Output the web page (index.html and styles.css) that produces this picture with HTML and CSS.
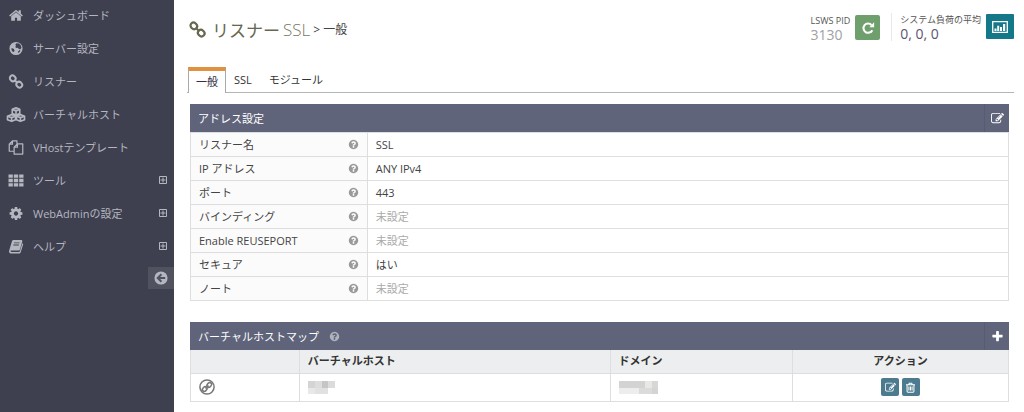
FILE: index.html
```html
<!DOCTYPE html>
<html lang="ja">
<head>
    <meta charset="UTF-8">
    <meta name="viewport" content="width=device-width, initial-scale=1.0">
    <title>リスナー SSL</title>
    <link rel="stylesheet" href="styles.css">
</head>
<body>
    <svg class="sprite" aria-hidden="true">
        <symbol id="i-home" viewBox="0 0 1792 1792"><path d="M1472 992v480q0 26-19 45t-45 19h-384v-384h-256v384h-384q-26 0-45-19t-19-45v-480q0-1 .5-3t.5-3l575-474 575 474q1 2 1 6zm223-69l-62 74q-8 9-21 11h-3q-13 0-21-7l-692-577-692 577q-12 8-24 7-13-2-21-11l-62-74q-8-10-7-23.500t11-21.500l719-599q32-26 76-26t76 26l244 204v-195q0-14 9-23t23-9h192q14 0 23 9t9 23v408l219 182q10 8 11 21.500t-7 23.500z"/></symbol>
        <symbol id="i-globe" viewBox="0 0 16 16"><path fill-rule="evenodd" d="M8 1a7 7 0 1 1 0 14A7 7 0 0 1 8 1zM8.500 2.500L7.200 4l.9 1-1 1.500 1.500 1 1.400-.4 1 1.400 1.800.2 1-1.700-.9-2.700-1.700-1.600zM4.300 7.600l-1.300.5.400 2 1.500 1.700.9-.3.700-1.400-.8-1.700zM11.800 9.600l-1.300 1.200-.6 1.900 1.700-.8 1.100-1.500z"/></symbol>
        <symbol id="i-link" viewBox="0 0 16 16"><g fill="none" stroke="currentColor" stroke-width="2.100"><rect x="1.300" y="1.800" width="6.400" height="5.600" rx="2.800" transform="rotate(45 4.500 4.600)"/><rect x="8.300" y="8.600" width="6.400" height="5.600" rx="2.800" transform="rotate(45 11.500 11.400)"/><path d="M6.500 6.600l3 2.800"/></g></symbol>
        <symbol id="i-cubes" viewBox="0 0 20 16"><g fill="none" stroke="currentColor" stroke-width="1.700" stroke-linejoin="round"><path d="M10 .9l4 1.600v4.300L10 8.500 6 6.800V2.500zM5.300 8.100l4.200 1.700v3.800l-4.200 1.600-4.400-1.600V9.800zM14.700 8.100l4.400 1.700v3.800l-4.400 1.600-4.200-1.600V9.800z"/><path d="M6 2.700l4 1.600 4-1.600M10 4.300v4.200M.9 9.900l4.400 1.700 4.200-1.700M5.300 11.600v3.600M10.500 9.900l4.200 1.700 4.400-1.700M14.700 11.600v3.600"/></g><path d="M6 2.500l4-1.600 4 1.600-4 1.800zM.9 9.800l4.400-1.700 4.200 1.700-4.200 1.800zM10.500 9.800l4.200-1.700 4.400 1.700-4.400 1.800z" opacity=".5"/></symbol>
        <symbol id="i-copy" viewBox="0 0 16 16"><path fill="none" stroke="currentColor" stroke-width="1.300" stroke-linejoin="round" d="M6 12H.8V4.500L4.200 1H9v3M4.200 1v3.500H.8M9.500 4.200h5.700V15H6V7.600zM9.500 4.200v3.500H6"/></symbol>
        <symbol id="i-th" viewBox="0 0 16 16"><path d="M0 1.500h4.600V5H0zM5.700 1.500h4.600V5H5.700zM11.400 1.500H16V5h-4.600zM0 6.200h4.600v3.600H0zM5.700 6.200h4.600v3.600H5.700zM11.400 6.200H16v3.600h-4.600zM0 11h4.600v3.500H0zM5.700 11h4.600v3.500H5.700zM11.400 11H16v3.500h-4.600z"/></symbol>
        <symbol id="i-cog" viewBox="0 0 1792 1792"><path d="M1152 896q0-106-75-181t-181-75-181 75-75 181 75 181 181 75 181-75 75-181zm512-109v222q0 12-8 23t-20 13l-185 28q-19 54-39 91 35 50 107 138 10 12 10 25t-9 23q-27 37-99 108t-94 71q-12 0-26-9l-138-108q-44 23-91 38-16 136-29 186-7 28-36 28h-222q-14 0-24.500-8.500t-11.500-21.500l-28-184q-49-16-90-37l-141 107q-10 9-25 9-14 0-25-11-126-114-165-168-7-10-7-23 0-12 8-23 15-21 51-66.500t54-70.500q-27-50-41-99l-183-27q-13-2-21-12.500t-8-23.500v-222q0-12 8-23t19-13l186-28q14-46 39-92-40-57-107-138-10-12-10-24 0-10 9-23 26-36 98.500-107.500t94.500-71.500q13 0 26 10l138 107q44-23 91-38 16-136 29-186 7-28 36-28h222q14 0 24.500 8.500t11.500 21.500l28 184q49 16 90 37l142-107q9-9 24-9 13 0 25 10 129 119 165 170 7 8 7 22 0 12-8 23-15 21-51 66.500t-54 70.500q26 50 41 98l183 28q13 2 21 12.500t8 23.500z"/></symbol>
        <symbol id="i-book" viewBox="0 0 16 16"><path fill-rule="evenodd" d="M5.300 1h8.200c1 0 1.500.7 1.200 1.700l-2.400 8.200c-.3 1-.8 1.300-1.700 1.300H3c-.7 0-1 .4-.8.900.2.500.6.700 1.200.7h7.700c.6 0 .9-.3 1.100-.9l2.600-8.400c.8.4 1 .9.700 1.700l-2.500 8c-.3.900-1 1.300-1.900 1.300H3.200C1.700 15.500.5 14.500.5 13c0-.5.300-.9.400-1.400L3.700 2.500C4 1.600 4.400 1 5.300 1zM6 3.600l-.3.900h5.900l.3-.9zM5.300 5.900l-.3.900h5.900l.3-.9z"/></symbol>
        <symbol id="i-plus-box" viewBox="0 0 8 8"><path fill="none" stroke="currentColor" d="M.5.5h7v7h-7zM1.500 4h5M4 1.500v5"/></symbol>
        <symbol id="i-back" viewBox="0 0 16 16"><circle cx="8" cy="8" r="7.500"/><path fill="none" stroke="#51525f" stroke-width="2.200" d="M8.500 3.700L4.200 8l4.300 4.300M4.500 8h8.300"/></symbol>
        <symbol id="i-help" viewBox="0 0 1792 1792"><path d="M1024 1376v-192q0-14-9-23t-23-9h-192q-14 0-23 9t-9 23v192q0 14 9 23t23 9h192q14 0 23-9t9-23zm256-672q0-88-55.500-163t-138.500-116-170-41q-243 0-371 213-15 24 8 42l132 100q7 6 19 6 16 0 25-12 53-68 86-92 34-24 86-24 48 0 85.500 26t37.500 59q0 38-20 61t-68 45q-63 28-115.500 86.500t-52.500 125.500v36q0 14 9 23t23 9h192q14 0 23-9t9-23q0-19 21.500-49.500t54.500-49.500q32-18 49-28.500t46-35 44.500-48 28-60.500 12.500-81zm384 192q0 209-103 385.500t-279.500 279.500-385.500 103-385.500-103-279.500-279.500-103-385.500 103-385.500 279.500-279.500 385.500-103 385.500 103 279.500 279.500 103 385.500z"/></symbol>
        <symbol id="i-edit" viewBox="0 0 1792 1792"><path d="M888 1184l116-116-152-152-116 116v56h96v96h56zm440-720q-16-16-33 1l-350 350q-17 17-1 33t33-1l350-350q17-17 1-33zm80 594v190q0 119-84.500 203.500t-203.500 84.500h-832q-119 0-203.500-84.500t-84.500-203.500v-832q0-119 84.500-203.500t203.500-84.500h832q63 0 117 25 15 7 18 23 3 17-9 29l-49 49q-14 14-32 8-23-6-45-6h-832q-66 0-113 47t-47 113v832q0 66 47 113t113 47h832q66 0 113-47t47-113v-126q0-13 9-22l64-64q15-15 35-7t20 29zm-96-738l288 288-672 672h-288v-288zm444 132l-92 92-288-288 92-92q28-28 68-28t68 28l152 152q28 28 28 68t-28 68z"/></symbol>
        <symbol id="i-plus" viewBox="0 0 1792 1792"><path d="M1600 736v192q0 40-28 68t-68 28h-416v416q0 40-28 68t-68 28h-192q-40 0-68-28t-28-68v-416h-416q-40 0-68-28t-28-68v-192q0-40 28-68t68-28h416v-416q0-40 28-68t68-28h192q40 0 68 28t28 68v416h416q40 0 68 28t28 68z"/></symbol>
        <symbol id="i-repeat" viewBox="0 0 16 16"><path fill="none" stroke="currentColor" stroke-width="2.400" d="M12.900 10.500A5.300 5.300 0 1 1 12 4.500"/><path d="M15 1.500V7H9.500z"/></symbol>
        <symbol id="i-chart" viewBox="0 0 16 12"><path fill="none" stroke="currentColor" stroke-width="1.300" d="M.7.700h14.600v10.600H.7z"/><path d="M2.500 7.500h2V10h-2zM5.200 4.800h2V10h-2zM8 6h2v4H8zM11 3h2.200v7H11z"/></symbol>
        <symbol id="i-trash" viewBox="0 0 16 16"><path fill="none" stroke="currentColor" stroke-width="1.500" d="M1.500 4h13M5.300 4l.9-2.200h3.600l.9 2.200M3 4v9.500c0 .8.400 1.300 1.200 1.300h7.600c.8 0 1.200-.5 1.200-1.300V4M5.700 6.500v5.800M8 6.500v5.800M10.300 6.500v5.800"/></symbol>
        <symbol id="i-mapped" viewBox="0 0 16 16"><g fill="none" stroke="currentColor" stroke-width="1.500"><circle cx="8" cy="8" r="7.100"/><rect x="3.200" y="8.200" width="5" height="3.800" rx="1.900" transform="rotate(-45 5.700 10.100)"/><rect x="7.800" y="4" width="5" height="3.800" rx="1.900" transform="rotate(-45 10.300 5.900)"/><path d="M6.500 9.500l3-3"/></g></symbol>
    </svg>

    <aside class="sidebar">
        <nav>
            <a href="#"><svg class="icon"><use href="#i-home"/></svg>ダッシュボード</a>
            <a href="#"><svg class="icon"><use href="#i-globe"/></svg>サーバー設定</a>
            <a href="#"><svg class="icon"><use href="#i-link"/></svg>リスナー</a>
            <a href="#"><svg class="icon"><use href="#i-cubes"/></svg>バーチャルホスト</a>
            <a href="#"><svg class="icon"><use href="#i-copy"/></svg>VHostテンプレート</a>
            <a href="#"><svg class="icon"><use href="#i-th"/></svg>ツール<svg class="expand"><use href="#i-plus-box"/></svg></a>
            <a href="#"><svg class="icon"><use href="#i-cog"/></svg>WebAdminの設定<svg class="expand"><use href="#i-plus-box"/></svg></a>
            <a href="#"><svg class="icon"><use href="#i-book"/></svg>ヘルプ<svg class="expand"><use href="#i-plus-box"/></svg></a>
        </nav>
        <button class="minify" aria-label="メニューを閉じる"><svg><use href="#i-back"/></svg></button>
    </aside>

    <main>
        <header>
            <h1><svg><use href="#i-link"/></svg>リスナー <span class="name">SSL</span> <small>&gt; 一般</small></h1>
            <div class="stats">
                <div class="stat pid">
                    <p>LSWS PID<span>3130</span></p>
                    <button class="restart" aria-label="再起動"><svg><use href="#i-repeat"/></svg></button>
                </div>
                <div class="stat load">
                    <p>システム負荷の平均<span>0, 0, 0</span></p>
                    <button class="graph" aria-label="統計"><svg><use href="#i-chart"/></svg></button>
                </div>
            </div>
        </header>

        <nav class="tabs">
            <a class="active" href="#">一般</a>
            <a href="#">SSL</a>
            <a href="#">モジュール</a>
        </nav>

        <section class="panel">
            <div class="panel-head">
                <h2>アドレス設定</h2>
                <button aria-label="編集"><svg><use href="#i-edit"/></svg></button>
            </div>
            <table class="settings">
                <tr><th><div>リスナー名<svg class="help"><use href="#i-help"/></svg></div></th><td>SSL</td></tr>
                <tr><th><div>IP アドレス<svg class="help"><use href="#i-help"/></svg></div></th><td>ANY IPv4</td></tr>
                <tr><th><div>ポート<svg class="help"><use href="#i-help"/></svg></div></th><td>443</td></tr>
                <tr><th><div>バインディング<svg class="help"><use href="#i-help"/></svg></div></th><td class="unset">未設定</td></tr>
                <tr><th><div>Enable REUSEPORT<svg class="help"><use href="#i-help"/></svg></div></th><td class="unset">未設定</td></tr>
                <tr><th><div>セキュア<svg class="help"><use href="#i-help"/></svg></div></th><td>はい</td></tr>
                <tr><th><div>ノート<svg class="help"><use href="#i-help"/></svg></div></th><td class="unset">未設定</td></tr>
            </table>
        </section>

        <section class="panel">
            <div class="panel-head">
                <h2>バーチャルホストマップ<svg class="help"><use href="#i-help"/></svg></h2>
                <button aria-label="追加"><svg><use href="#i-plus"/></svg></button>
            </div>
            <table class="hosts">
                <thead>
                    <tr><th class="col-icon"></th><th class="col-host">バーチャルホスト</th><th class="col-domain">ドメイン</th><th class="col-action">アクション</th></tr>
                </thead>
                <tbody>
                    <tr>
                        <td><svg class="mapped"><use href="#i-mapped"/></svg></td>
                        <td>
                            <!-- masked host name -->
                            <svg class="mask" width="27" height="13" viewBox="0 0 27 13"><path fill="#d5d4d5" d="M0 0h7v7H0z"/><path fill="#dedddd" d="M7 0h7v7H7z"/><path fill="#c6c4c6" d="M14 0h6v7h-6z"/><path fill="#dcdbdc" d="M20 0h7v7h-7z"/><path fill="#e9e8e9" d="M0 7h7v6H0z"/><path fill="#e2e1e1" d="M7 7h13v6H7z"/></svg>
                        </td>
                        <td>
                            <!-- masked domain -->
                            <svg class="mask" width="39" height="13" viewBox="0 0 39 13"><path fill="#d4d3d3" d="M0 0h26v7H0z"/><path fill="#e9e8e4" d="M26 0h7v7h-7z"/><path fill="#d8d7d7" d="M33 0h6v7h-6z"/><path fill="#eeedee" d="M0 7h20v6H0z"/><path fill="#dcdbdb" d="M20 7h13v6H20z"/><path fill="#d5d4d4" d="M33 7h6v6h-6z"/></svg>
                        </td>
                        <td class="actions">
                            <button aria-label="編集"><svg><use href="#i-edit"/></svg></button>
                            <button aria-label="削除"><svg><use href="#i-trash"/></svg></button>
                        </td>
                    </tr>
                </tbody>
            </table>
        </section>
    </main>
</body>
</html>
```
FILE: styles.css
```css
* {
    box-sizing: border-box;
}
body {
    margin: 0;
    min-height: 100vh;
    display: flex;
    background-color: #fff;
    color: #444;
    font-family: "Open Sans", "Noto Sans CJK JP", sans-serif;
    font-size: 11px;
}
svg {
    fill: currentColor;
    flex: none;
}
button {
    display: flex;
    align-items: center;
    justify-content: center;
    padding: 0;
    border: none;
    color: #fff;
    cursor: pointer;
}
.sprite {
    position: absolute;
    width: 0;
    height: 0;
}

/* sidebar */
.sidebar {
    flex: none;
    width: 174px;
    background-color: #3f404f;
}
.sidebar nav {
    display: flex;
    flex-direction: column;
    gap: 3px;
}
.sidebar a {
    display: flex;
    align-items: center;
    height: 30px;
    padding: 0 7px 0 6px;
    color: #b4b6c0;
    text-decoration: none;
}
.sidebar .icon {
    width: 20px;
    height: 15px;
    margin-right: 7px;
}
.sidebar .expand {
    width: 8px;
    height: 8px;
    margin-left: auto;
}
.minify {
    width: 26px;
    height: 22px;
    margin: 6px 0 0 auto;
    background-color: #51525f;
    color: #b4b6c0;
}
.minify svg {
    width: 14px;
    height: 14px;
}

/* page header */
main {
    flex: 1;
    min-width: 0;
    padding-bottom: 10px;
}
header {
    display: flex;
    justify-content: space-between;
    min-height: 67px;
    padding: 13px 10px 0 15px;
}
h1 {
    display: flex;
    align-items: center;
    gap: 3px;
    height: 32px;
    margin: 0;
    color: #67674f;
    font-size: 17px;
    font-weight: 400;
}
h1 svg {
    width: 17px;
    height: 17px;
    margin-right: 3px;
}
h1 .name {
    color: #77775f;
    font-weight: 300;
}
h1 small {
    color: #444;
    font-size: 12px;
    font-weight: 400;
    word-spacing: normal;
}
.stats {
    display: flex;
}
.stat {
    display: flex;
    gap: 5px;
    height: 28px;
}
.stat p {
    margin: 0;
    color: #555;
    font-size: 9px;
    line-height: 11px;
}
.stat span {
    display: block;
    font-size: 14px;
    line-height: 18px;
}
.pid {
    padding: 2px 11px 0 0;
    border-right: 1px solid #e8e8e8;
}
.pid span {
    color: #a0a0a8;
}
.load {
    padding: 1px 0 0 8px;
}
.load span {
    color: #5c5470;
}
.restart {
    width: 25px;
    height: 25px;
    border-radius: 2px;
    background-color: #6f9f6c;
}
.restart svg {
    width: 14px;
    height: 14px;
}
.graph {
    width: 28px;
    height: 25px;
    border-radius: 1px;
    background-color: #157888;
}
.graph svg {
    width: 16px;
    height: 12px;
}

/* tabs */
.tabs {
    display: flex;
    height: 26px;
    margin: 0 10px 0 13px;
    padding-left: 1px;
    border-bottom: 1px solid #b5b5b5;
}
.tabs a {
    height: 26px;
    padding: 0 9px;
    color: #333;
    line-height: 25px;
    text-decoration: none;
}
.tabs a + a {
    padding-left: 8px;
}
.tabs .active {
    padding: 0 7px;
    border: 1px solid #aaa;
    border-top: 4px solid #e0913f;
    border-bottom: none;
    background-color: #fff;
    color: #334;
    line-height: 22px;
}

/* panels */
.panel {
    margin: 11px 15px 0 16px;
}
.panel + .panel {
    margin-top: 21px;
}
.panel-head {
    display: flex;
    justify-content: space-between;
    height: 28px;
    background-color: #5f647b;
    color: #fff;
}
.panel-head h2 {
    display: flex;
    align-items: center;
    margin: 0;
    padding-left: 8px;
    font-size: 11px;
    font-weight: 400;
}
.panel-head .help {
    margin-left: 10px;
    color: #b0b2bd;
}
.panel-head button {
    width: 25px;
    border-left: 1px solid #575c72;
    background-color: transparent;
}
.panel-head button svg {
    width: 13px;
    height: 13px;
}
.help {
    width: 11px;
    height: 11px;
    color: #999;
}
table {
    width: 100%;
    table-layout: fixed;
    border-collapse: collapse;
}
th,
td {
    height: 24px;
    padding: 0 8px;
    border: 1px solid #dedede;
    line-height: 16px;
    text-align: left;
}
.settings th {
    width: 21.6%;
    background-color: #fbfbfb;
    font-weight: 400;
}
.settings th div {
    display: flex;
    align-items: center;
    justify-content: space-between;
}
.settings .unset {
    color: #aaa;
}
.hosts thead th {
    height: 23px;
    border-top: none;
    background-color: #eceeef;
    color: #333;
}
.col-icon {
    width: 13.3%;
}
.col-host {
    width: 38%;
}
.col-domain {
    width: 22.3%;
}
.hosts .col-action {
    text-align: center;
}
.hosts tbody td {
    height: 28px;
    padding: 0 8px;
}
.hosts td svg {
    display: block;
}
.mapped {
    width: 16px;
    height: 16px;
    color: #777;
}
.actions button {
    display: inline-flex;
    width: 18px;
    height: 18px;
    border-radius: 2px;
    background-color: #4c7a8e;
    vertical-align: middle;
}
.hosts .actions {
    text-align: center;
}
.actions svg {
    width: 11px;
    height: 11px;
}
```
